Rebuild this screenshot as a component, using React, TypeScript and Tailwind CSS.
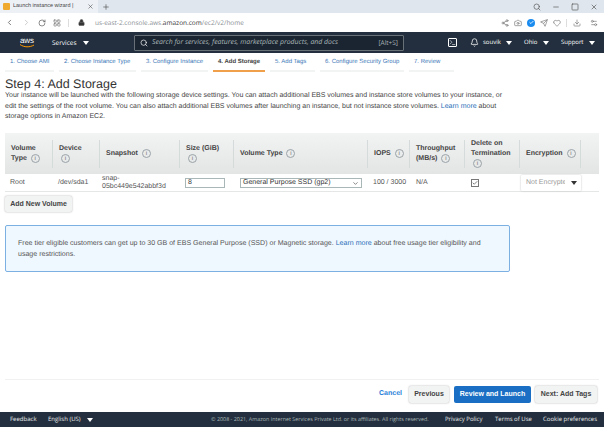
import { ChevronLeft, ChevronRight, RotateCw, LayoutGrid, Lock, Search, X, Plus, Minus, Square, Camera, Heart, Send, Download, Settings2, Share2, Bell, Terminal, Check, ChevronDown } from "lucide-react";

const pasos = [
  { nome: "1. Choose AMI", w: "w-[49px]" },
  { nome: "2. Choose Instance Type", w: "w-[77px]" },
  { nome: "3. Configure Instance", w: "w-[67px]" },
  { nome: "4. Add Storage", w: "w-[52px]", ativo: true },
  { nome: "5. Add Tags", w: "w-[45px]" },
  { nome: "6. Configure Security Group", w: "w-[84px]" },
  { nome: "7. Review", w: "w-[45px]" },
];

function Info() {
  return (
    <span className="ml-[2px] inline-flex h-[9px] w-[9px] items-center justify-center rounded-full border border-[#9aa3a8] text-[6px] font-normal leading-none text-[#666]">
      i
    </span>
  );
}

function Caret({ className }: { className: string }) {
  return <span className={`inline-block h-0 w-0 shrink-0 border-x-[3px] border-t-[4px] border-x-transparent ${className}`} />;
}

function Th({ w, children }: { w: string; children: React.ReactNode }) {
  return (
    <div className={`flex h-[41px] shrink-0 items-center ${w}`}>
      <div className="flex h-[28px] w-full items-center border-r border-[#d5dbdb] pl-[6px] text-[7px] font-bold leading-[10px] text-[#444]">
        <div>{children}</div>
      </div>
    </div>
  );
}

export default function App() {
  return (
    <div className="flex h-[427px] w-[604px] flex-col overflow-hidden bg-white font-['Liberation_Sans',Arial,sans-serif] text-[7px] text-[#444] [text-rendering:geometricPrecision]">
      {/* abas do navegador */}
      <div className="flex h-[13px] items-center bg-[#dfe6ee] text-[#555]">
        <div className="flex h-full w-[98px] items-center bg-[#edf1f6] pl-[3px] pr-[3px]">
          <span className="h-[7px] w-[7px] shrink-0 rounded-[1px] bg-[#f0a92f]" />
          <span className="ml-[3px] w-[62px] overflow-hidden whitespace-nowrap text-[5.5px] text-[#444]">Launch instance wizard | EC2</span>
          <X size={7} className="ml-[12px]" />
        </div>
        <Plus size={8} className="ml-[4px]" />
        <div className="ml-auto flex items-center gap-[11px] pr-[6px]">
          <Search size={8} />
          <Minus size={8} />
          <Square size={8} />
          <X size={8} />
        </div>
      </div>

      {/* barra de endereco */}
      <div className="flex h-[19px] items-center bg-white pl-[5px] text-[#555]">
        <ChevronLeft size={9} />
        <ChevronRight size={9} className="ml-[8px] text-[#bbb]" />
        <RotateCw size={8} className="ml-[7px]" />
        <LayoutGrid size={8} className="ml-[7px] text-[#777]" />
        <div className="ml-[7px] h-[8px] w-px bg-[#ddd]" />
        <Lock size={7} className="ml-[9px]" fill="#333" />
        <span className="ml-[10px] whitespace-nowrap font-['Open_Sans',sans-serif] text-[6.5px] text-[#8a8f94]">
          us-east-2.console.aws.<span className="text-[#333]">amazon.com</span>/ec2/v2/home
        </span>
        <div className="ml-auto flex items-center gap-[5px] pr-[6px] text-[#777]">
          <Share2 size={8} />
          <Camera size={8} />
          <span className="flex h-[8px] w-[8px] items-center justify-center rounded-full bg-[#1a8cf0]">
            <Check size={5} className="text-white" strokeWidth={4} />
          </span>
          <Send size={8} />
          <Heart size={8} />
          <div className="h-[8px] w-px bg-[#ddd]" />
          <Download size={8} className="ml-[1px]" />
          <Settings2 size={8} className="ml-[4px]" />
        </div>
      </div>

      {/* nav aws */}
      <div className="flex h-[21px] items-center bg-[#232f3e] text-white">
        <div className="ml-[18px] flex w-[18px] flex-col items-center">
          <span className="text-[8px] leading-[7px]">aws</span>
          <svg width="17" height="4" viewBox="0 0 17 4">
            <path d="M1 0.5 C5 3.5 11 3.5 15 1" fill="none" stroke="#f90" strokeWidth="1" />
          </svg>
        </div>
        <div className="ml-[16px] flex w-[82px] items-center font-['Open_Sans',sans-serif] text-[6.5px]">
          <span className="w-[31px] whitespace-nowrap">Services</span>
          <Caret className="border-t-white" />
        </div>
        <div className="flex h-[16px] w-[270px] items-center rounded-[1px] border border-[#687078] bg-[#1b2531] pl-[5px] pr-[5px] text-[#aab7b8]">
          <Search size={8} className="text-white" />
          <span className="ml-[4px] whitespace-nowrap pt-[2px] font-['Open_Sans',sans-serif] text-[6.9px] italic">Search for services, features, marketplace products, and docs</span>
          <span className="ml-auto whitespace-nowrap font-['Open_Sans',sans-serif] text-[6.5px]">[Alt+S]</span>
        </div>
        <Terminal size={9} className="ml-[44px] rounded-[1px] border border-white" />
        <Bell size={9} className="ml-[13px]" />
        <div className="ml-[4px] flex items-center whitespace-nowrap font-['Open_Sans',sans-serif] text-[6px]">
          <span className="w-[23px]">souvik</span>
          <Caret className="border-t-white" />
          <span className="ml-[12px] w-[19px]">Ohio</span>
          <Caret className="border-t-white" />
          <span className="ml-[12px] w-[28px]">Support</span>
          <Caret className="border-t-white" />
        </div>
      </div>

      {/* passos */}
      <div className="flex h-[19px] items-end gap-[5px] pl-[5px]">
        {pasos.map((p) => (
          <div
            key={p.nome}
            className={`flex h-[19px] items-center whitespace-nowrap border-b-2 pl-[5px] pt-[2px] text-[6px] ${p.w} ${
              p.ativo ? "border-[#f0a04b] font-bold text-[#444]" : "border-[#f2f3f3] text-[#3b78b8]"
            }`}
          >
            {p.nome}
          </div>
        ))}
      </div>

      {/* conteudo */}
      <div className="flex flex-1 flex-col px-[5px] pt-[6px]">
        <h1 className="text-[12.5px] leading-[13px] text-[#333]">Step 4: Add Storage</h1>
        <p className="w-[505px] text-[7px] leading-[10.5px] text-[#444]">
          Your instance will be launched with the following storage device settings. You can attach additional EBS volumes and instance store volumes to your instance, or edit the settings of the root volume. You can also attach additional EBS volumes after launching an instance, but not instance store volumes. <span className="text-[#2a6fb8]">Learn more</span> about storage options in Amazon EC2.
        </p>

        <div className="mt-[10.5px] flex w-[594px] bg-gradient-to-b from-[#f2f3f3] to-[#e3e5e5]">
          <Th w="w-[48px]">Volume<br />Type <Info /></Th>
          <Th w="w-[47px]">Device<br /><Info /></Th>
          <Th w="w-[80px]">Snapshot <Info /></Th>
          <Th w="w-[54px]">Size (GiB)<br /><Info /></Th>
          <Th w="w-[134px]">Volume Type <Info /></Th>
          <Th w="w-[42px]">IOPS <Info /></Th>
          <Th w="w-[55px]">Throughput<br />(MB/s) <Info /></Th>
          <Th w="w-[55px]">Delete on<br />Termination<br /><Info /></Th>
          <Th w="w-[61px]">Encryption <Info /></Th>
        </div>
        <div className="flex h-[18px] w-[594px] items-center border-b border-[#e5e7e7] pt-[1px] text-[7px] leading-[8px] text-[#555]">
          <div className="w-[48px] pl-[5px]">Root</div>
          <div className="w-[47px] pl-[5px]">/dev/sda1</div>
          <div className="w-[80px] pl-[2px]">snap-<br />05bc449e542abbf3d</div>
          <div className="w-[54px] pl-[5px]">
            <div className="flex h-[10px] w-[40px] items-center border border-[#aab7b8] pl-[2px] text-[#333]">8</div>
          </div>
          <div className="w-[134px] pl-[6px]">
            <div className="flex h-[10px] w-[122px] items-center justify-between border border-[#aab7b8] px-[2px] text-[#333]">
              General Purpose SSD (gp2)
              <ChevronDown size={7} />
            </div>
          </div>
          <div className="w-[42px] pl-[5px]">100 / 3000</div>
          <div className="w-[55px] pl-[6px]">N/A</div>
          <div className="w-[55px] pl-[6px]">
            <div className="flex h-[8px] w-[8px] items-center justify-center border border-[#777] bg-white">
              <Check size={6} strokeWidth={3} className="shrink-0" />
            </div>
          </div>
          <div className="w-[61px]">
            <div className="ml-[1px] flex h-[16px] w-[60px] items-center overflow-hidden rounded-[1px] bg-white pl-[5px] text-[#999] shadow-[0_0_2px_#bbb]">
              <span className="w-[39px] overflow-hidden whitespace-nowrap">Not Encrypted</span>
              <Caret className="ml-[6px] border-t-[#333]" />
            </div>
          </div>
        </div>

        <button className="mt-[4px] h-[16px] w-[67px] rounded-[2px] bg-[#f2f3f3] text-[7px] font-bold text-[#444] shadow-[0_0_2px_#aaa]">
          Add New Volume
        </button>

        <div className="mt-[13px] h-[47px] w-[505px] rounded-[2px] border border-[#7cb0e3] bg-[#f0f8ff] px-[12px] pt-[13px] text-[7.05px] leading-[10.5px] text-[#555]">
          Free tier eligible customers can get up to 30 GB of EBS General Purpose (SSD) or Magnetic storage. <span className="text-[#2a6fb8]">Learn more</span> about free usage tier eligibility and usage restrictions.
        </div>

        {/* acoes */}
        <div className="mt-auto flex h-[33px] w-[594px] items-center justify-end border-t border-[#f0f1f1] pb-[4px] pr-[2px] text-[7px] font-bold">
          <span className="mr-[7px] text-[#2a7fd8]">Cancel</span>
          <button className="h-[17px] w-[40px] rounded-[2px] bg-[#f2f3f3] text-[#444] shadow-[0_0_2px_#aaa]">Previous</button>
          <button className="ml-[5px] h-[17px] w-[77px] rounded-[2px] bg-[#1a6fc4] text-white">Review and Launch</button>
          <button className="ml-[4px] h-[17px] w-[62px] rounded-[2px] bg-[#f2f3f3] text-[#444] shadow-[0_0_2px_#aaa]">Next: Add Tags</button>
        </div>
      </div>

      {/* rodape */}
      <div className="flex h-[15px] items-center whitespace-nowrap bg-[#232f3e] pl-[10px] font-['Open_Sans',sans-serif] text-[6px] text-[#eaeded]">
        <span className="w-[38px]">Feedback</span>
        <span className="w-[39px]">English (US)</span>
        <Caret className="border-t-white" />
        <span className="ml-[118px] w-[234px] text-[5.4px] text-[#aab7b8]">© 2008 - 2021, Amazon Internet Services Private Ltd. or its affiliates. All rights reserved.</span>
        <span className="w-[50px]">Privacy Policy</span>
        <span className="w-[48px]">Terms of Use</span>
        <span>Cookie preferences</span>
      </div>
    </div>
  );
}
